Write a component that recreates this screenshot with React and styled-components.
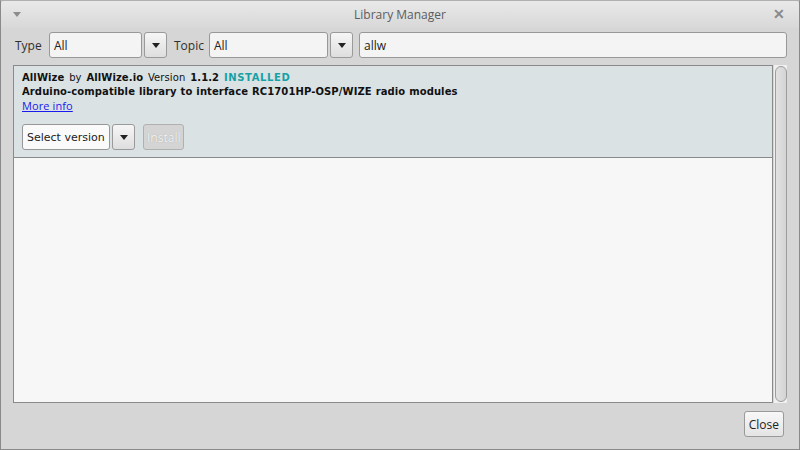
import React from "react";
import styled, { createGlobalStyle } from "styled-components";

const Global = createGlobalStyle`
  html, body { margin: 0; padding: 0; background: #d6d6d6; }
  * { box-sizing: border-box; }
`;

const Window = styled.div`
  width: 800px;
  height: 450px;
  display: flex;
  flex-direction: column;
  background: #d6d6d6;
  border: 1px solid #8a8a8a;
  border-top-color: #b0b0b0;
  font-family: "Open Sans", "Noto Sans", sans-serif;
  overflow: hidden;
`;

const TitleBar = styled.div`
  height: 27px;
  flex: none;
  display: flex;
  align-items: center;
  justify-content: space-between;
  padding: 0 12px 0 12px;
  background: linear-gradient(#e9e9e9, #d8d8d8);
  border-radius: 4px 4px 0 0;
`;

const Title = styled.div`
  font-size: 12px;
  color: #5c5c5c;
  margin-left: 6px;
`;

const MenuArrow = styled.div`
  width: 0;
  height: 0;
  border-left: 4px solid transparent;
  border-right: 4px solid transparent;
  border-top: 5px solid #8c8c8c;
  margin-top: -1px;
`;

const CloseX = styled.div`
  width: 14px;
  font-size: 14px;
  font-weight: 700;
  color: #8a8a8a;
  line-height: 1;
  margin-top: -2px;
`;

const Toolbar = styled.div`
  height: 26px;
  margin-top: 4px;
  display: flex;
  align-items: center;
  padding: 0 12px 0 13px;
  flex: none;
`;

const Label = styled.span`
  width: ${(p) => p.$w}px;
  font-size: 12px;
  color: #2f2f2f;
  padding-left: 1px;
`;

const Combo = styled.div`
  display: flex;
  gap: 2px;
  height: 26px;
  margin-right: ${(p) => p.$after || 0}px;
`;

const Field = styled.div`
  width: ${(p) => (p.$w ? `${p.$w}px` : "auto")};
  flex: ${(p) => (p.$grow ? 1 : "none")};
  height: 26px;
  display: flex;
  align-items: center;
  padding: 0 4px;
  font-size: ${(p) => p.$fs || 12}px;
  color: #222;
  white-space: nowrap;
  overflow: hidden;
  background: ${(p) => p.$bg || "#f4f4f4"};
  border: 1px solid #989898;
  border-radius: 3px;
`;

const ArrowButton = styled.div`
  width: 23px;
  height: 26px;
  display: flex;
  align-items: center;
  justify-content: center;
  background: linear-gradient(#f6f6f6, #dedede);
  border: 1px solid #9a9a9a;
  border-radius: 3px;
`;

const Caret = styled.div`
  width: 0;
  height: 0;
  border-left: 4px solid transparent;
  border-right: 4px solid transparent;
  border-top: 5px solid #222;
`;

const Body = styled.div`
  flex: none;
  height: 338px;
  margin: 7px 12px 0 12px;
  display: flex;
  gap: 1px;
`;

const List = styled.div`
  flex: 1;
  background: #f7f7f7;
  border: 1px solid #8a8a8a;
`;

const Item = styled.div`
  height: 92px;
  background: #dae2e4;
  border-bottom: 1px solid #8a8a8a;
  padding: 5px 8px 0 8px;
  font-family: "DejaVu Sans", Verdana, sans-serif;
  font-size: 10px;
  color: #111;
`;

const Line = styled.div`
  height: 14px;
  line-height: 14px;
  white-space: nowrap;
  letter-spacing: 0.1px;
  word-spacing: ${(p) => p.$ws || 0}px;
  font-weight: ${(p) => (p.$bold ? 700 : 400)};
`;

const B = styled.b`
  font-weight: 700;
`;

const Installed = styled.span`
  color: #17a1a5;
  font-weight: 700;
  letter-spacing: 0.6px;
`;

const Link = styled.a`
  color: #1a1aee;
  text-decoration: underline;
  font-size: 11px;
  font-family: "Open Sans", "Noto Sans", sans-serif;
`;

const Actions = styled.div`
  display: flex;
  gap: 8px;
  margin-top: 11px;
  align-items: center;
`;

const Button = styled.div`
  height: 26px;
  display: flex;
  align-items: center;
  padding: 0 ${(p) => p.$pad || 4}px;
  font-family: "Open Sans", "Noto Sans", sans-serif;
  font-size: 12px;
  color: ${(p) => (p.$disabled ? "#f4f4f4" : "#222")};
  text-shadow: ${(p) => (p.$disabled ? "0 0 1px #9a9a9a" : "none")};
  background: ${(p) =>
    p.$disabled ? "#d4d4d4" : "linear-gradient(#f8f8f8, #e4e4e4)"};
  border: 1px solid ${(p) => (p.$disabled ? "#b0b0b0" : "#9a9a9a")};
  border-radius: 3px;
`;

const Scrollbar = styled.div`
  width: 13px;
  background: #f0f0f0;
  padding: 1px 0 1px 1px;
  display: flex;
`;

const Thumb = styled.div`
  flex: 1;
  background: linear-gradient(90deg, #e2e2e2, #d4d4d4);
  border: 1px solid #9c9c9c;
  border-radius: 6px;
`;

const Footer = styled.div`
  flex: 1;
  display: flex;
  justify-content: flex-end;
  padding: 8px 15px 0 0;
`;

export default function App() {
  return (
    <Window>
      <Global />
      <TitleBar>
        <MenuArrow />
        <Title>Library Manager</Title>
        <CloseX>✕</CloseX>
      </TitleBar>
      <Toolbar>
        <Label $w={35}>Type</Label>
        <Combo $after={6}>
          <Field $w={93}>All</Field>
          <ArrowButton>
            <Caret />
          </ArrowButton>
        </Combo>
        <Label $w={36}>Topic</Label>
        <Combo $after={6}>
          <Field $w={119}>All</Field>
          <ArrowButton>
            <Caret />
          </ArrowButton>
        </Combo>
        <Field $grow>allw</Field>
      </Toolbar>
      <Body>
        <List>
          <Item>
            <Line $ws={1.5}>
              <B>AllWize</B> by <B>AllWize.io</B> Version <B>1.1.2</B>{" "}
              <Installed>INSTALLED</Installed>
            </Line>
            <Line $bold $ws={0.3}>
              Arduino-compatible library to interface RC1701HP-OSP/WIZE radio
              modules
            </Line>
            <Line>
              <Link href="#">More info</Link>
            </Line>
            <Actions>
              <Combo>
                <Field $w={88} $bg="#fafafa" $fs={11}>
                  Select version
                </Field>
                <ArrowButton>
                  <Caret />
                </ArrowButton>
              </Combo>
              <Button $disabled $pad={3}>
                Install
              </Button>
            </Actions>
          </Item>
        </List>
        <Scrollbar>
          <Thumb />
        </Scrollbar>
      </Body>
      <Footer>
        <Button>Close</Button>
      </Footer>
    </Window>
  );
}
